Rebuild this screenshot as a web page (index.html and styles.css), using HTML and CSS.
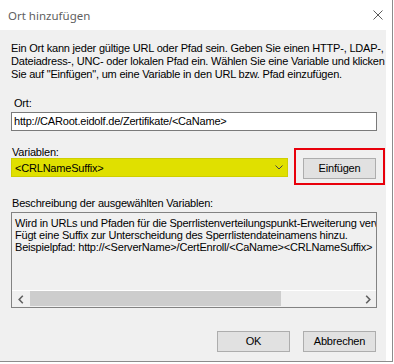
FILE: index.html
```html
<!DOCTYPE html>
<html lang="de">
<head>
<meta charset="utf-8">
<title>Ort hinzufügen</title>
<link rel="stylesheet" href="styles.css">
</head>
<body>
<div class="window">
  <div class="titlebar">
    <span class="title">Ort hinzufügen</span>
    <svg class="close" width="10" height="10" viewBox="0 0 10 10"><path d="M0.5 0.5L9.5 9.5M9.5 0.5L0.5 9.5" stroke="#5a5a5a" stroke-width="1" fill="none"/></svg>
  </div>
  <div class="body">
    <div class="content">
      <p class="intro">Ein Ort kann jeder gültige URL oder Pfad sein. Geben Sie einen HTTP-, LDAP-,<br>Dateiadress-, UNC- oder lokalen Pfad ein. Wählen Sie eine Variable und klicken<br>Sie auf "Einfügen", um eine Variable in den URL bzw. Pfad einzufügen.</p>
      <span class="lbl lbl-ort">Ort:</span>
      <div class="input">http://CARoot.eidolf.de/Zertifikate/&lt;CaName&gt;</div>
      <span class="lbl lbl-var">Variablen:</span>
      <div class="varrow">
        <div class="combo">
          <span>&lt;CRLNameSuffix&gt;</span>
          <svg width="8" height="5" viewBox="0 0 8 5"><path d="M0.5 0.5L4 4L7.5 0.5" stroke="#444" stroke-width="1" fill="none"/></svg>
        </div>
        <button class="btn btn-insert">Einfügen</button>
      </div>
      <span class="lbl lbl-desc">Beschreibung der ausgewählten Variablen:</span>
      <div class="desc">
        <div class="desc-text">Wird in URLs und Pfaden für die Sperrlistenverteilungspunkt-Erweiterung verwendet.<br>Fügt eine Suffix zur Unterscheidung des Sperrlistendateinamens hinzu.<br>Beispielpfad: http://&lt;ServerName&gt;/CertEnroll/&lt;CaName&gt;&lt;CRLNameSuffix&gt;</div>
        <div class="hscroll">
          <div class="arrow"><svg width="6" height="9" viewBox="0 0 6 9"><path d="M4.8 0.8L1.2 4.5L4.8 8.2" stroke="#606060" stroke-width="1.6" fill="none"/></svg></div>
          <div class="track"><div class="thumb"></div></div>
          <div class="arrow"><svg width="6" height="9" viewBox="0 0 6 9"><path d="M1.2 0.8L4.8 4.5L1.2 8.2" stroke="#606060" stroke-width="1.6" fill="none"/></svg></div>
        </div>
      </div>
      <div class="actions">
        <button class="btn">OK</button>
        <button class="btn">Abbrechen</button>
      </div>
    </div>
    <div class="strip"></div>
  </div>
</div>
</body>
</html>
```

FILE: styles.css
```css
html, body {
  margin: 0;
  padding: 0;
  background: #ffffff;
}
body {
  font-family: "Liberation Sans", Arial, sans-serif;
  font-size: 11px;
  letter-spacing: -0.2px;
  color: #000;
}
.window {
  width: 392px;
  border-right: 1px solid #8c8c8c;
  border-bottom: 1px solid #8c8c8c;
}
.titlebar {
  height: 30px;
  background: #ffffff;
  display: flex;
  align-items: center;
  justify-content: space-between;
  padding: 0 9px 0 8px;
}
.title {
  font-family: "Noto Sans", "Open Sans", sans-serif;
  font-size: 11.5px;
  letter-spacing: 0;
  color: #5f5f5f;
}
.close {
  display: block;
  margin-top: -1px;
}
.body {
  display: flex;
  height: 331px;
  background: #f0f0f0;
}
.content {
  flex: 1;
  min-width: 0;
  padding: 12px 9px 0 11px;
  overflow: hidden;
}
.strip {
  width: 6px;
  background: #ffffff;
}
.intro {
  margin: 0;
  line-height: 13px;
  white-space: nowrap;
}
.lbl {
  display: block;
  line-height: 13px;
  white-space: nowrap;
}
.lbl-ort {
  margin-top: 16px;
  padding-left: 3px;
}
.input {
  margin-top: 2px;
  height: 19px;
  box-sizing: border-box;
  border: 1px solid #7a7a7a;
  background: #ffffff;
  padding: 0 2px;
  line-height: 17px;
  white-space: nowrap;
  overflow: hidden;
}
.lbl-var {
  margin-top: 15px;
  line-height: 12px;
  padding-left: 1px;
}
.varrow {
  display: flex;
  align-items: flex-start;
}
.combo {
  width: 277px;
  height: 19px;
  box-sizing: border-box;
  background: #e0e000;
  border: 1px solid #cfcf00;
  display: flex;
  align-items: center;
  justify-content: space-between;
  padding: 0 4px 0 3px;
  white-space: nowrap;
}
.combo svg {
  display: block;
}
.btn {
  width: 73px;
  height: 21px;
  box-sizing: border-box;
  border: 1px solid #adadad;
  background: #e1e1e1;
  font-family: "Liberation Sans", Arial, sans-serif;
  font-size: 11px;
  letter-spacing: -0.2px;
  color: #000;
  padding: 0;
  margin: 0;
  line-height: 19px;
}
.btn-insert {
  margin-left: 15px;
  position: relative;
}
.btn-insert::after {
  content: "";
  position: absolute;
  left: -10px;
  right: -10px;
  top: -11px;
  bottom: -7px;
  border: 2px solid #e8000b;
}
.lbl-desc {
  margin-top: 18px;
  padding-left: 1px;
}
.desc {
  margin-top: 2px;
  height: 96px;
  box-sizing: border-box;
  border: 1px solid #828282;
  background: #f0f0f0;
  display: flex;
  flex-direction: column;
}
.desc-text {
  flex: 1;
  padding: 4px 0 0 3px;
  line-height: 12px;
  white-space: nowrap;
  overflow: hidden;
}
.hscroll {
  height: 17px;
  box-sizing: border-box;
  border-top: 1px solid #ffffff;
  display: flex;
  align-items: stretch;
}
.arrow {
  width: 17px;
  display: flex;
  align-items: center;
  justify-content: center;
}
.arrow svg {
  display: block;
}
.track {
  flex: 1;
  padding: 0 0 1px 1px;
  display: flex;
}
.thumb {
  width: 251px;
  background: #cdcdcd;
}
.actions {
  display: flex;
  justify-content: flex-end;
  gap: 13px;
  margin-top: 23px;
  padding-right: 1px;
}
```
